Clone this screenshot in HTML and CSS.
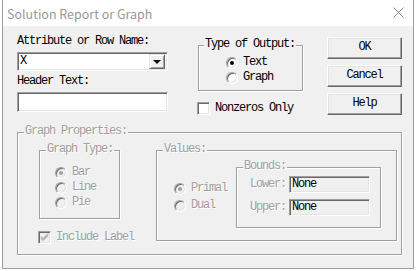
FILE: index.html
```html
<!DOCTYPE html>
<html>
<head>
<meta charset="utf-8">
<link rel="stylesheet" href="styles.css">
</head>
<body>
<div class="window">
  <div class="titlebar">
    <span class="title">Solution Report or Graph</span>
    <svg class="close" width="11" height="11" viewBox="0 0 11 11"><path d="M0.5 0.5L10.5 10.5M10.5 0.5L0.5 10.5" stroke="#8a8a8a" stroke-width="1" fill="none"/></svg>
  </div>
  <div class="client">
    <div class="top">
      <div class="leftcol">
        <div class="lbl">Attribute or Row Name:</div>
        <div class="field combo"><span class="val">X</span><span class="dropbtn"><span class="arrow"></span></span></div>
        <div class="lbl lbl2">Header Text:</div>
        <div class="field header"></div>
      </div>
      <div class="midcol">
        <div class="group output">
          <span class="legend">Type of Output:</span>
          <div class="opt first"><span class="radio on"></span><span>Text</span></div>
          <div class="opt"><span class="radio"></span><span>Graph</span></div>
        </div>
        <div class="checkrow nonzero"><span class="check"></span><span>Nonzeros Only</span></div>
      </div>
      <div class="buttons">
        <div class="btn">OK</div>
        <div class="btn">Cancel</div>
        <div class="btn">Help</div>
      </div>
    </div>
    <div class="group gp dis">
      <span class="legend">Graph Properties:</span>
      <div class="leftpart">
        <div class="group gtype">
          <span class="legend">Graph Type:</span>
          <div class="opt first"><span class="radio on"></span><span>Bar</span></div>
          <div class="opt"><span class="radio"></span><span>Line</span></div>
          <div class="opt"><span class="radio"></span><span>Pie</span></div>
        </div>
        <div class="checkrow incl"><span class="check checked"><svg width="11" height="11" viewBox="0 0 11 11"><path d="M2 4.5L4 6.5L9 1.5M2 5.5L4 7.5L9 2.5M2 6.5L4 8.5L9 3.5" stroke="#a0a0a0" stroke-width="1" fill="none"/></svg></span><span>Include Label</span></div>
      </div>
      <div class="group values">
        <span class="legend">Values:</span>
        <div class="vradios">
          <div class="opt vopt"><span class="radio on"></span><span>Primal</span></div>
          <div class="opt vopt"><span class="radio"></span><span>Dual</span></div>
        </div>
        <div class="group bounds">
          <span class="legend">Bounds:</span>
          <div class="brow first"><span class="blbl">Lower:</span><span class="field bfield">None</span></div>
          <div class="brow"><span class="blbl">Upper:</span><span class="field bfield">None</span></div>
        </div>
      </div>
    </div>
  </div>
</div>
</body>
</html>
```
FILE: styles.css
```css
* { box-sizing: border-box; }
html, body { margin: 0; padding: 0; }
body { background: #fff; width: 416px; height: 271px; overflow: hidden; }

.window {
  margin-left: 2px;
  width: 412px;
  height: 269px;
  border: 1px solid #9c9c9c;
  border-top: none;
  background: #f0f0f0;
  display: flex;
  flex-direction: column;
}
.titlebar {
  height: 26px;
  background: #fff;
  display: flex;
  align-items: center;
  justify-content: space-between;
  padding: 0 9px 0 4px;
}
.title {
  font-family: "Noto Sans CJK SC", "Noto Sans", sans-serif;
  font-size: 12.5px;
  color: #999;
  line-height: 16px;
  margin-top: 1px;
}
.close { display: block; margin-top: -1px; }

.client {
  flex: 1;
  padding: 9px 0 0 14px;
  font-family: "Liberation Mono", monospace;
  font-size: 12px;
  letter-spacing: -1.2px;
  color: #000;
  line-height: 13px;
}
.top { display: flex; align-items: flex-start; }
.leftcol { width: 151px; }
.lbl { height: 13px; white-space: nowrap; }
.lbl2 { margin-top: 4px; }

.field {
  border: 1px solid;
  border-color: #a0a0a0 #fff #fff #a0a0a0;
  box-shadow: inset 1px 1px 0 #696969, inset -1px -1px 0 #e3e3e3;
  background: #fff;
}
.combo {
  margin-top: 4px;
  height: 19px;
  display: flex;
  align-items: center;
  justify-content: space-between;
  padding: 2px 2px 2px 2px;
}
.combo .val { line-height: 13px; padding-left: 0; }
.dropbtn {
  width: 16px;
  height: 15px;
  background: #f0f0f0;
  border: 1px solid;
  border-color: #e3e3e3 #696969 #696969 #e3e3e3;
  box-shadow: inset 1px 1px 0 #fff, inset -1px -1px 0 #a0a0a0;
  display: flex;
  align-items: center;
  justify-content: center;
}
.arrow {
  width: 0; height: 0;
  border-left: 4px solid transparent;
  border-right: 4px solid transparent;
  border-top: 4px solid #000;
  margin-top: 1px;
}
.header { margin-top: 4px; height: 20px; }

.group {
  position: relative;
  border: 1px solid #a0a0a0;
  box-shadow: 1px 1px 0 #fff, inset 1px 1px 0 #fff;
}
.legend {
  position: absolute;
  top: -8px;
  left: 6px;
  padding: 0 1px;
  background: #f0f0f0;
  line-height: 13px;
  white-space: nowrap;
}

.midcol { margin-left: 30px; margin-top: 10px; }
.output { width: 105px; height: 46px; padding-left: 27px; }
.output .legend { left: 5px; }
.opt { display: flex; align-items: center; height: 15px; gap: 5px; white-space: nowrap; }
.output .first { margin-top: 9px; }

.radio {
  width: 12px; height: 12px;
  border-radius: 50%;
  border: 1px solid;
  border-color: #a0a0a0 #fff #fff #a0a0a0;
  box-shadow: inset 1px 1px 0 #696969, inset -1px -1px 0 #e3e3e3;
  background: #fff;
  position: relative;
  flex: none;
}
.radio.on::after {
  content: "";
  position: absolute;
  left: 3px; top: 3px;
  width: 4px; height: 4px;
  border-radius: 50%;
  background: #000;
}

.checkrow { display: flex; align-items: center; gap: 5px; height: 13px; white-space: nowrap; }
.nonzero { margin-top: 11px; margin-left: -1px; }
.check {
  width: 13px; height: 13px;
  border: 1px solid;
  border-color: #a0a0a0 #fff #fff #a0a0a0;
  box-shadow: inset 1px 1px 0 #696969, inset -1px -1px 0 #e3e3e3;
  background: #fff;
  flex: none;
  display: flex;
  align-items: center;
  justify-content: center;
}
.check svg { display: block; margin-left: 0; }

.buttons { margin-left: 24px; margin-top: 2px; display: flex; flex-direction: column; gap: 6px; }
.btn {
  width: 75px; height: 22px;
  border: 1px solid;
  border-color: #fff #696969 #696969 #fff;
  box-shadow: inset -1px -1px 0 #a0a0a0, inset 1px 1px 0 #e3e3e3;
  display: flex; align-items: center; justify-content: center;
  padding-bottom: 1px;
}

/* Graph properties (disabled) */
.gp {
  margin-top: 17px;
  width: 385px;
  height: 123px;
  display: flex;
  align-items: flex-start;
}
.dis { color: #a0a0a0; }
.dis .legend, .dis .opt span:last-child, .dis .checkrow span:last-child, .dis .blbl { text-shadow: 1px 1px 0 #fff; }
.dis .radio { background: #f0f0f0; }
.dis .radio.on::after { background: #a0a0a0; }
.dis .check { background: #f0f0f0; }

.leftpart { margin-left: 21px; margin-top: 17px; }
.gtype { width: 81px; height: 69px; padding-left: 15px; }
.gtype .first { margin-top: 14px; }
.incl { margin-top: 12px; margin-left: -1px; }

.values {
  margin-left: 22px;
  margin-top: 17px;
  width: 241px;
  height: 91px;
  display: flex;
  align-items: flex-start;
}
.vradios { margin-left: 17px; margin-top: 29px; width: 50px; }
.vopt { height: 17px; }
.bounds { margin-left: 12px; margin-top: 16px; width: 145px; height: 61px; }
.brow { display: flex; align-items: center; }
.brow.first { margin-top: 8px; }
.brow + .brow { margin-top: 6px; }
.blbl { width: 49px; text-align: right; margin-right: 3px; }
.bfield {
  width: 81px;
  height: 17px;
  background: #f0f0f0;
  color: #000;
  padding: 1px 0 0 2px;
  line-height: 13px;
}
```
